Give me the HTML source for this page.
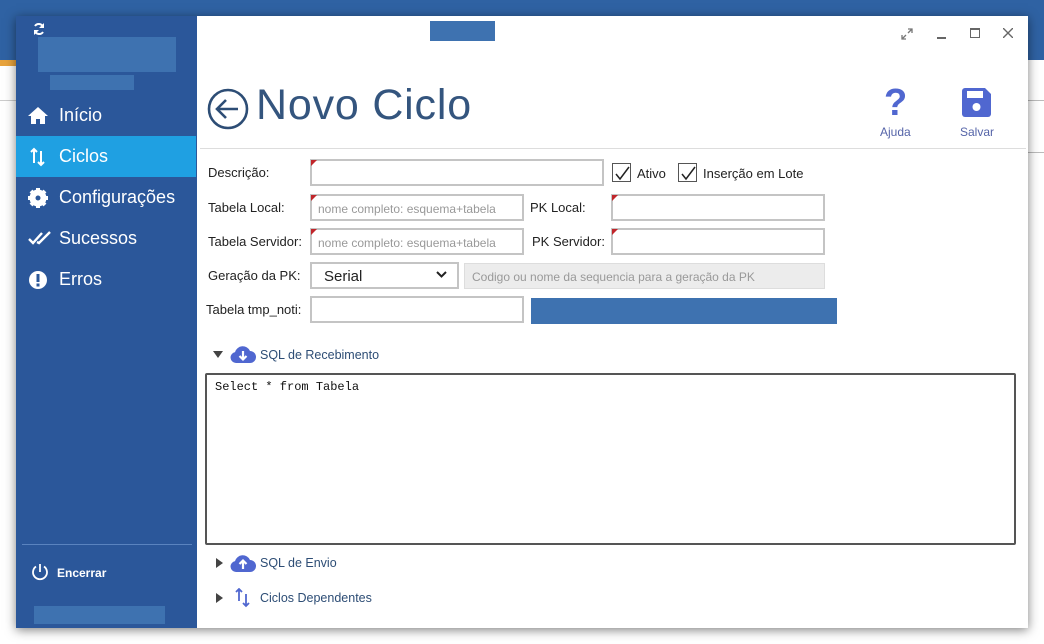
<!DOCTYPE html>
<html><head><meta charset="utf-8"><style>
*{box-sizing:border-box;margin:0;padding:0}
body{width:1044px;height:644px;overflow:hidden;background:#fff;font-family:"Liberation Sans",sans-serif;position:relative}
.abs{position:absolute}
.lbl{position:absolute;font-size:13px;color:#222}
.inp{position:absolute;border:2px solid #c4c4c4;background:#fff;height:27px}
.inp.req::before{content:"";position:absolute;left:-1px;top:-1px;border-top:6px solid #c0262b;border-right:6px solid transparent}
.ph{font-size:12px;color:#999;padding:6px 0 0 6px}
.nav{position:absolute;left:16px;width:180px;height:41px;color:#fff;font-size:18px;line-height:41px;padding-left:43px}
.nav svg{position:absolute;left:12px;top:11px}
.cb{position:absolute;width:19px;height:19px;border:1px solid #555;background:#fff}
.cb svg{position:absolute;left:2px;top:2px}
</style></head><body>
<div class="abs" style="left:0;top:0;width:1044px;height:16px;background:#2f62a3"></div>
<div class="abs" style="left:1028px;top:0;width:16px;height:60px;background:#2f62a3"></div>
<div class="abs" style="left:0;top:60px;width:16px;height:6px;background:#e8a33c"></div>
<div class="abs" style="left:0;top:0;width:16px;height:60px;background:#2f62a3"></div>
<div class="abs" style="left:0;top:100px;width:16px;height:1px;background:#ccc"></div>
<div class="abs" style="left:1028px;top:100px;width:16px;height:1px;background:#bbb"></div>
<div class="abs" style="left:1028px;top:152px;width:16px;height:1px;background:#bbb"></div>
<div class="abs" style="left:16px;top:16px;width:1012px;height:612px;box-shadow:0 2px 10px rgba(0,0,0,.5)"></div>
<div class="abs" style="left:16px;top:16px;width:181px;height:612px;background:#2b579a"></div>
<svg class="abs" style="left:32px;top:22px" width="14" height="14" viewBox="0 0 14 14"><path d="M11 5A4.5 4.5 0 0 0 3 4M3 9a4.5 4.5 0 0 0 8 1" stroke="#fff" stroke-width="2" fill="none"/><path d="M12 1v5H7z M2 13V8h5z" fill="#fff"/></svg>
<div class="abs" style="left:38px;top:37px;width:138px;height:35px;background:#3e72b0"></div>
<div class="abs" style="left:50px;top:75px;width:84px;height:15px;background:#3e72b0"></div>
<div class="nav" style="top:95px"><svg width="20" height="18" viewBox="0 0 20 18"><path d="M10 1L0 10h3v8h5v-5h4v5h5v-8h3z" fill="#fff"/></svg>Início</div>
<div class="nav" style="top:136px;background:#1fa0e2"><svg width="20" height="20" viewBox="0 0 20 20"><path d="M6 2v14M3 5l3-3 3 3M13 4v14M10 15l3 3 3-3" stroke="#fff" stroke-width="2" fill="none"/></svg>Ciclos</div>
<div class="nav" style="top:177px"><svg width="20" height="20" viewBox="0 0 20 20"><circle cx="10" cy="10" r="6.5" fill="none" stroke="#fff" stroke-width="4"/><path d="M10 0v20M0 10h20M3 3l14 14M17 3L3 17" stroke="#fff" stroke-width="4"/><circle cx="10" cy="10" r="2.5" fill="#2b579a"/></svg>Configurações</div>
<div class="nav" style="top:218px"><svg width="24" height="18" viewBox="0 0 24 18"><path d="M1 10l4 4 9-10M9 13l2 1 11-11" stroke="#fff" stroke-width="2.4" fill="none"/></svg>Sucessos</div>
<div class="nav" style="top:259px"><svg width="20" height="20" viewBox="0 0 20 20"><circle cx="10" cy="10" r="9" fill="#fff"/><rect x="8.5" y="4" width="3" height="8" fill="#2b579a"/><rect x="8.5" y="13.5" width="3" height="3" fill="#2b579a"/></svg>Erros</div>
<div class="abs" style="left:22px;top:544px;width:170px;height:1px;background:#5a83bf"></div>
<svg class="abs" style="left:31px;top:563px" width="18" height="18" viewBox="0 0 18 18"><path d="M5 3.5A7 7 0 1 0 13 3.5" stroke="#fff" stroke-width="1.8" fill="none"/><path d="M9 1v8" stroke="#fff" stroke-width="1.8"/></svg>
<div class="abs" style="left:57px;top:566px;color:#fff;font-size:12px;font-weight:bold">Encerrar</div>
<div class="abs" style="left:34px;top:606px;width:131px;height:18px;background:#3e72b0"></div>
<div class="abs" style="left:197px;top:16px;width:831px;height:612px;background:#fff"></div>
<div class="abs" style="left:430px;top:21px;width:65px;height:20px;background:#3e72b0"></div>
<svg class="abs" style="left:901px;top:28px" width="12" height="12" viewBox="0 0 12 12"><path d="M1 11l4-4M11 1L7 5M1 7v4h4M11 5V1H7" stroke="#777" stroke-width="1.3" fill="none"/></svg>
<div class="abs" style="left:937px;top:37px;width:9px;height:2px;background:#666"></div>
<div class="abs" style="left:970px;top:28px;width:10px;height:10px;border:1.3px solid #666;border-top-width:2.5px"></div>
<svg class="abs" style="left:1003px;top:28px" width="10" height="10" viewBox="0 0 10 10"><path d="M0 0l10 10M10 0L0 10" stroke="#666" stroke-width="1.4"/></svg>
<svg class="abs" style="left:207px;top:88px" width="42" height="42" viewBox="0 0 42 42"><circle cx="21" cy="21" r="19" fill="none" stroke="#2d4d75" stroke-width="2.6"/><path d="M31 21H11M19 12l-9 9 9 9" stroke="#2d4d75" stroke-width="2.6" fill="none"/></svg>
<div class="abs" style="left:256px;top:81px;font-size:43px;color:#34557e;letter-spacing:0.8px">Novo Ciclo</div>
<div class="abs" style="left:884px;top:82px;font-size:38px;font-weight:bold;color:#5067d0">?</div>
<div class="abs" style="left:880px;top:125px;font-size:12px;color:#5564a8">Ajuda</div>
<svg class="abs" style="left:962px;top:88px" width="29" height="29" viewBox="0 0 29 29"><path d="M0 3a3 3 0 0 1 3-3h20l6 6v20a3 3 0 0 1-3 3H3a3 3 0 0 1-3-3z" fill="#5067d0"/><rect x="5" y="3" width="16" height="7" fill="#fff"/><circle cx="14.5" cy="19" r="4" fill="#fff"/></svg>
<div class="abs" style="left:960px;top:125px;font-size:12px;color:#5564a8">Salvar</div>
<div class="abs" style="left:200px;top:148px;width:826px;height:1px;background:#ddd"></div>
<div class="lbl" style="left:208px;top:165px">Descrição:</div>
<div class="inp req" style="left:310px;top:159px;width:294px"></div>
<div class="cb" style="left:612px;top:163px"><svg width="15" height="15" viewBox="0 0 15 15"><path d="M1 8l4 5 9-12" stroke="#222" stroke-width="1.5" fill="none"/></svg></div>
<div class="lbl" style="left:637px;top:166px">Ativo</div>
<div class="cb" style="left:678px;top:163px"><svg width="15" height="15" viewBox="0 0 15 15"><path d="M1 8l4 5 9-12" stroke="#222" stroke-width="1.5" fill="none"/></svg></div>
<div class="lbl" style="left:703px;top:166px">Inserção em Lote</div>
<div class="lbl" style="left:208px;top:200px">Tabela Local:</div>
<div class="inp req ph" style="left:310px;top:194px;width:214px">nome completo: esquema+tabela</div>
<div class="lbl" style="left:530px;top:200px">PK Local:</div>
<div class="inp req" style="left:611px;top:194px;width:214px"></div>
<div class="lbl" style="left:208px;top:234px">Tabela Servidor:</div>
<div class="inp req ph" style="left:310px;top:228px;width:214px">nome completo: esquema+tabela</div>
<div class="lbl" style="left:532px;top:234px">PK Servidor:</div>
<div class="inp req" style="left:611px;top:228px;width:214px"></div>
<div class="lbl" style="left:208px;top:268px">Geração da PK:</div>
<div class="inp" style="left:310px;top:262px;width:149px;font-size:15px;color:#222;padding:4px 0 0 12px">Serial</div>
<svg class="abs" style="left:436px;top:271px" width="11" height="8" viewBox="0 0 11 8"><path d="M1 1l4.5 4.5L10 1" stroke="#222" stroke-width="2" fill="none"/></svg>
<div class="abs" style="left:464px;top:263px;width:361px;height:26px;background:#ececec;border:1px solid #ddd;font-size:12px;color:#999;padding:6px 0 0 7px">Codigo ou nome da sequencia para a geração da PK</div>
<div class="lbl" style="left:206px;top:302px">Tabela tmp_noti:</div>
<div class="inp" style="left:310px;top:296px;width:214px"></div>
<div class="abs" style="left:531px;top:298px;width:306px;height:26px;background:#3e72b0"></div>
<svg class="abs" style="left:213px;top:351px" width="10" height="8" viewBox="0 0 10 8"><path d="M0 0h10L5 7z" fill="#444"/></svg>
<svg class="abs" style="left:230px;top:345px" width="26" height="19" viewBox="0 0 26 19"><path d="M6 18a5.5 5.5 0 0 1-1-10.9A8 8 0 0 1 20 6a6 6 0 0 1 0 12z" fill="#5067d0"/><path d="M13 6v8M9.5 11l3.5 3.5 3.5-3.5" stroke="#fff" stroke-width="2.2" fill="none"/></svg>
<div class="lbl" style="left:260px;top:348px;font-size:12.5px;color:#2d4d75">SQL de Recebimento</div>
<div class="abs" style="left:205px;top:373px;width:811px;height:172px;border:2px solid #555;border-radius:2px;background:#fff;font-family:'Liberation Mono',monospace;font-size:12px;color:#111;padding:5px 0 0 8px">Select * from Tabela</div>
<svg class="abs" style="left:216px;top:558px" width="7" height="10" viewBox="0 0 7 10"><path d="M0 0v10l7-5z" fill="#444"/></svg>
<svg class="abs" style="left:230px;top:554px" width="26" height="19" viewBox="0 0 26 19"><path d="M6 18a5.5 5.5 0 0 1-1-10.9A8 8 0 0 1 20 6a6 6 0 0 1 0 12z" fill="#5067d0"/><path d="M13 15V7M9.5 10l3.5-3.5 3.5 3.5" stroke="#fff" stroke-width="2.2" fill="none"/></svg>
<div class="lbl" style="left:260px;top:556px;font-size:12.5px;color:#2d4d75">SQL de Envio</div>
<svg class="abs" style="left:216px;top:593px" width="7" height="10" viewBox="0 0 7 10"><path d="M0 0v10l7-5z" fill="#444"/></svg>
<svg class="abs" style="left:235px;top:588px" width="16" height="20" viewBox="0 0 16 20"><path d="M4 1v12M1 4l3-3 3 3M11 6v12M8 15l3 3 3-3" stroke="#5067d0" stroke-width="1.8" fill="none"/></svg>
<div class="lbl" style="left:260px;top:591px;font-size:12.5px;color:#2d4d75">Ciclos Dependentes</div>
</body></html>
